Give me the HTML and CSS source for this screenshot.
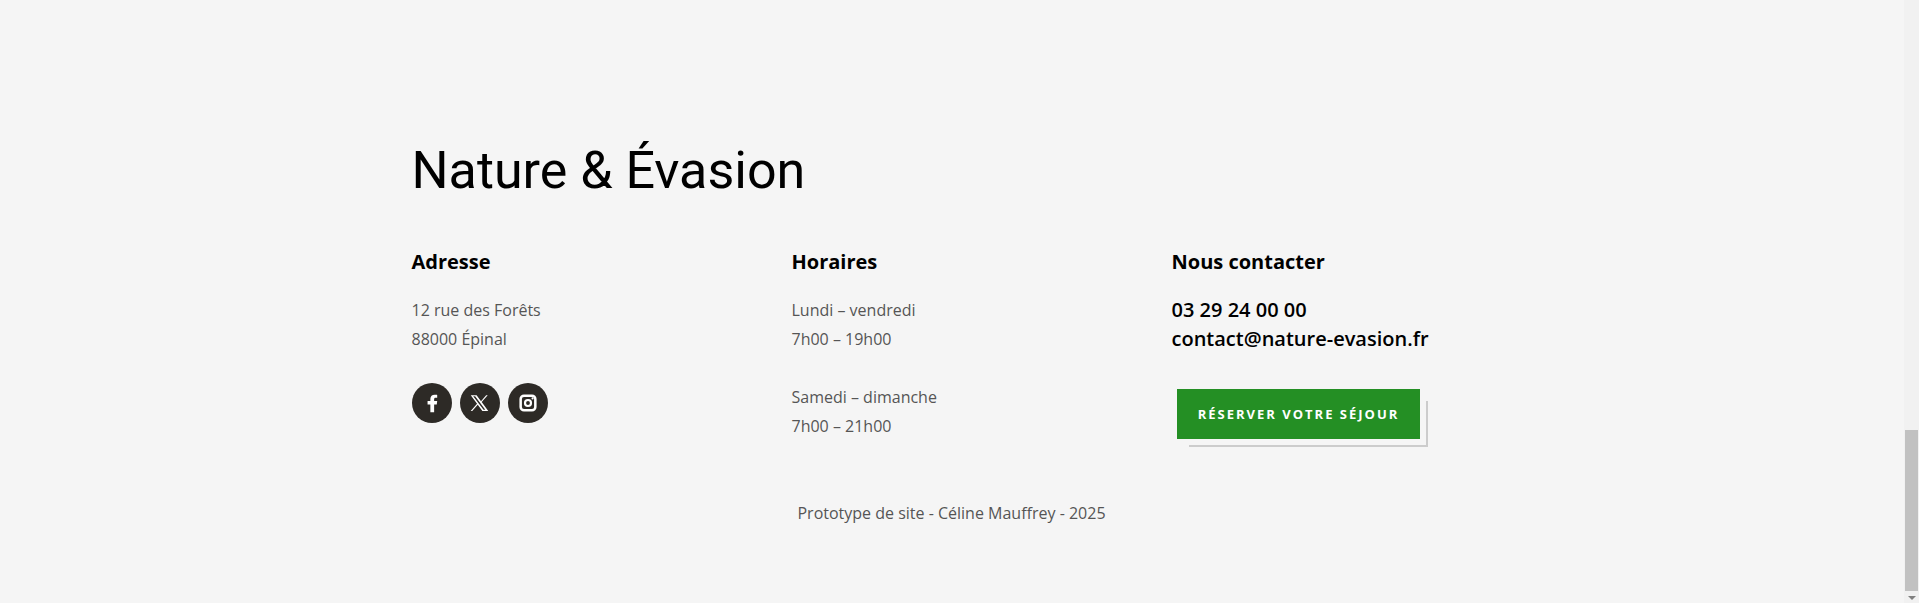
FILE: index.html

```html
<!DOCTYPE html>
<html lang="fr">
<head>
    <meta charset="UTF-8">
    <title>Nature &amp; Évasion</title>
    <link rel="stylesheet" href="styles.css">
</head>
<body>
    <div class="page">
        <footer class="footer">
            <h2 class="site-title">Nature &amp; Évasion</h2>
            <div class="columns">
                <div class="col">
                    <h4 class="col-title">Adresse</h4>
                    <p class="col-text">12 rue des Forêts<br>88000 Épinal</p>
                    <div class="socials">
                        <a class="social" href="#" aria-label="Facebook">
                            <svg viewBox="0 0 24 24" width="21" height="21"><path fill="#fff" d="M15 22v-9h3l.5-4h-3.500V7.200c0-1 .3-1.700 1.800-1.700h1.700V2.200c-.4-.1-1.500-.2-2.900-.2-2.900 0-4.900 1.700-4.900 4.800V9H7.500v4h3.200v9z"/></svg>
                        </a>
                        <a class="social" href="#" aria-label="X">
                            <svg viewBox="0 0 24 24" width="21" height="21"><path fill="#fff" fill-rule="evenodd" d="M2 2.500h6.700l5 6.800 5.900-6.800h1.800l-6.900 7.900 7.500 10.100h-6.700l-5.300-7.200-6.300 7.200H1.900l7.300-8.300zm2.800 1.300l11.800 15.400h2L7 3.800z"/></svg>
                        </a>
                        <a class="social" href="#" aria-label="Instagram">
                            <svg viewBox="0 0 24 24" width="20" height="20"><rect x="3.200" y="3.200" width="17.600" height="17.600" rx="4" fill="none" stroke="#fff" stroke-width="3"/><circle cx="12" cy="12" r="3.600" fill="none" stroke="#fff" stroke-width="2.600"/><circle cx="17.500" cy="6.500" r="1.300" fill="#fff"/></svg>
                        </a>
                    </div>
                </div>
                <div class="col">
                    <h4 class="col-title">Horaires</h4>
                    <p class="col-text">Lundi – vendredi<br>7h00 – 19h00</p>
                    <p class="col-text">Samedi – dimanche<br>7h00 – 21h00</p>
                </div>
                <div class="col">
                    <h4 class="col-title">Nous contacter</h4>
                    <p class="col-text contact">03 29 24 00 00<br>contact@nature-evasion.fr</p>
                    <a class="btn" href="#">Réserver votre séjour</a>
                </div>
            </div>
            <p class="credit">Prototype de site - Céline Mauffrey - 2025</p>
        </footer>
        <!-- barre de défilement -->
        <div class="scrollbar">
            <div class="scroll-thumb"></div>
            <div class="scroll-arrow"></div>
        </div>
    </div>
</body>
</html>
```

FILE: styles.css

```css
html, body {
    height: 100%;
}
body {
    margin: 0;
    font-family: "Open Sans", Arial, sans-serif;
    background-color: #f5f5f5;
    overflow: hidden;
}
.page {
    display: flex;
    height: 100%;
}
.footer {
    flex: 1;
    padding: 137px 0 0 411.5px;
}
.site-title {
    margin: 0;
    font-family: Roboto, Arial, sans-serif;
    font-size: 52px;
    font-weight: 400;
    line-height: 68px;
    color: #000;
}
.columns {
    display: grid;
    grid-template-columns: repeat(3, 380px);
    margin-top: 43px;
}
.col-title {
    margin: 0 0 20px;
    font-size: 20px;
    font-weight: 700;
    line-height: 28px;
    color: #000;
}
.col-text {
    margin: 0 0 29px;
    font-size: 16px;
    line-height: 29px;
    color: #555;
}
.contact {
    font-size: 20px;
    font-weight: 600;
    color: #000;
    margin-top: -1px;
    margin-bottom: 36px;
}
.socials {
    display: flex;
    gap: 8px;
}
.social {
    display: flex;
    align-items: center;
    justify-content: center;
    width: 40px;
    height: 40px;
    border-radius: 50%;
    background: #2d2a26;
}
.btn {
    display: block;
    position: relative;
    width: 243px;
    height: 50px;
    margin-left: 5.5px;
    font-size: 13px;
    font-weight: 700;
    line-height: 50px;
    letter-spacing: 2px;
    text-align: center;
    text-transform: uppercase;
    text-decoration: none;
    color: #fff;
    background: #248f24;
}
/* ombre décalée : juste le bord droit et le bas */
.btn::after {
    content: "";
    position: absolute;
    top: 12px;
    left: 12px;
    right: -8px;
    bottom: -8px;
    border-right: 2px solid #ccc;
    border-bottom: 2px solid #ccc;
    z-index: -1;
}
.credit {
    margin: 29px 0 0;
    width: 1080px;
    text-align: center;
    font-size: 16px;
    line-height: 29px;
    color: #555;
}
.scrollbar {
    display: flex;
    flex-direction: column;
    justify-content: flex-end;
    align-items: center;
    width: 15px;
    padding-bottom: 1px;
    background: #f1f1f1;
}
.scroll-thumb {
    width: 13px;
    height: 161px;
    margin-bottom: 5px;
    background: #c1c1c1;
}
.scroll-arrow {
    width: 0;
    height: 0;
    margin-bottom: 2px;
    border-left: 4px solid transparent;
    border-right: 4px solid transparent;
    border-top: 4px solid #808080;
}
```
